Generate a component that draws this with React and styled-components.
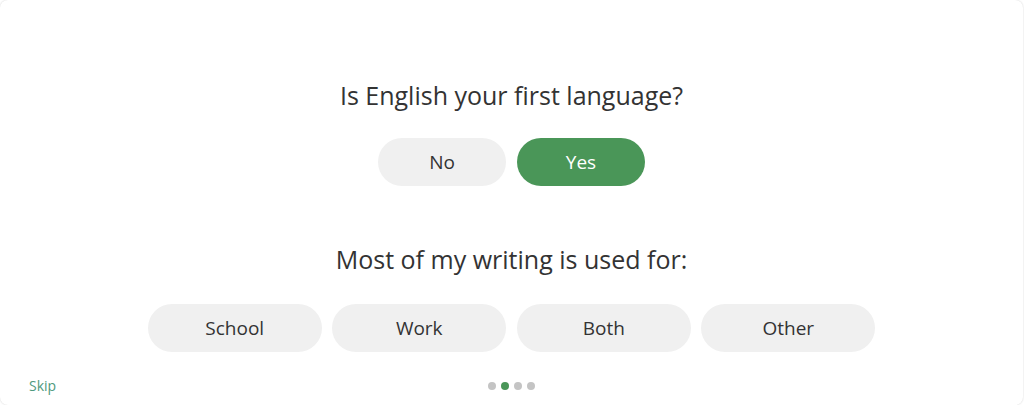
import styled, { createGlobalStyle } from "styled-components";

const GlobalStyle = createGlobalStyle`
  body {
    margin: 0;
    background: #ffffff;
    font-family: "Open Sans", "Liberation Sans", sans-serif;
  }
`;

const Card = styled.div`
  box-sizing: border-box;
  width: 1023px;
  height: 405px;
  background: #fff;
  border-radius: 8px;
  box-shadow: 0 0 2px rgba(0, 0, 0, 0.18);
  display: flex;
  flex-direction: column;
  align-items: center;
  padding-top: 79px;
`;

const Question = styled.h2`
  margin: 0;
  font-size: 25px;
  line-height: 32px;
  font-weight: 400;
  color: #333;
`;

const Choices = styled.div`
  display: flex;
  gap: ${(p) => p.$gap || 11}px;
  margin-top: ${(p) => p.$top}px;
`;

const Choice = styled.button`
  width: ${(p) => p.$width}px;
  height: 48px;
  border: none;
  border-radius: 24px;
  font-family: inherit;
  font-size: 19px;
  color: ${(p) => (p.$active ? "#fff" : "#333")};
  background: ${(p) => (p.$active ? "#4a9658" : "#f0f0f0")};
  cursor: pointer;
`;

const Section = styled.div`
  display: flex;
  flex-direction: column;
  align-items: center;
  margin-top: ${(p) => p.$top || 0}px;
`;

const Footer = styled.div`
  margin-top: auto;
  align-self: stretch;
  display: grid;
  grid-template-columns: 1fr auto 1fr;
  align-items: center;
  padding: 0 29px 10px;
`;

const Skip = styled.a`
  justify-self: start;
  font-size: 14px;
  color: #4f9a7d;
  cursor: pointer;
`;

const Dots = styled.div`
  display: flex;
  gap: 5px;
`;

const Dot = styled.span`
  width: 8px;
  height: 8px;
  border-radius: 50%;
  background: ${(p) => (p.$active ? "#4a9658" : "#c4c4c4")};
`;

const uses = ["School", "Work", "Both", "Other"];

export default function App() {
  return (
    <>
      <GlobalStyle />
      <Card>
        <Section>
          <Question>Is English your first language?</Question>
          <Choices $top={27}>
            <Choice $width={128}>No</Choice>
            <Choice $width={128} $active>
              Yes
            </Choice>
          </Choices>
        </Section>
        <Section $top={57}>
          <Question>Most of my writing is used for:</Question>
          <Choices $top={29} $gap={10.5}>
            {uses.map((u) => (
              <Choice key={u} $width={174}>
                {u}
              </Choice>
            ))}
          </Choices>
        </Section>
        <Footer>
          <Skip>Skip</Skip>
          <Dots>
            {[0, 1, 2, 3].map((i) => (
              <Dot key={i} $active={i === 1} />
            ))}
          </Dots>
          <span />
        </Footer>
      </Card>
    </>
  );
}
